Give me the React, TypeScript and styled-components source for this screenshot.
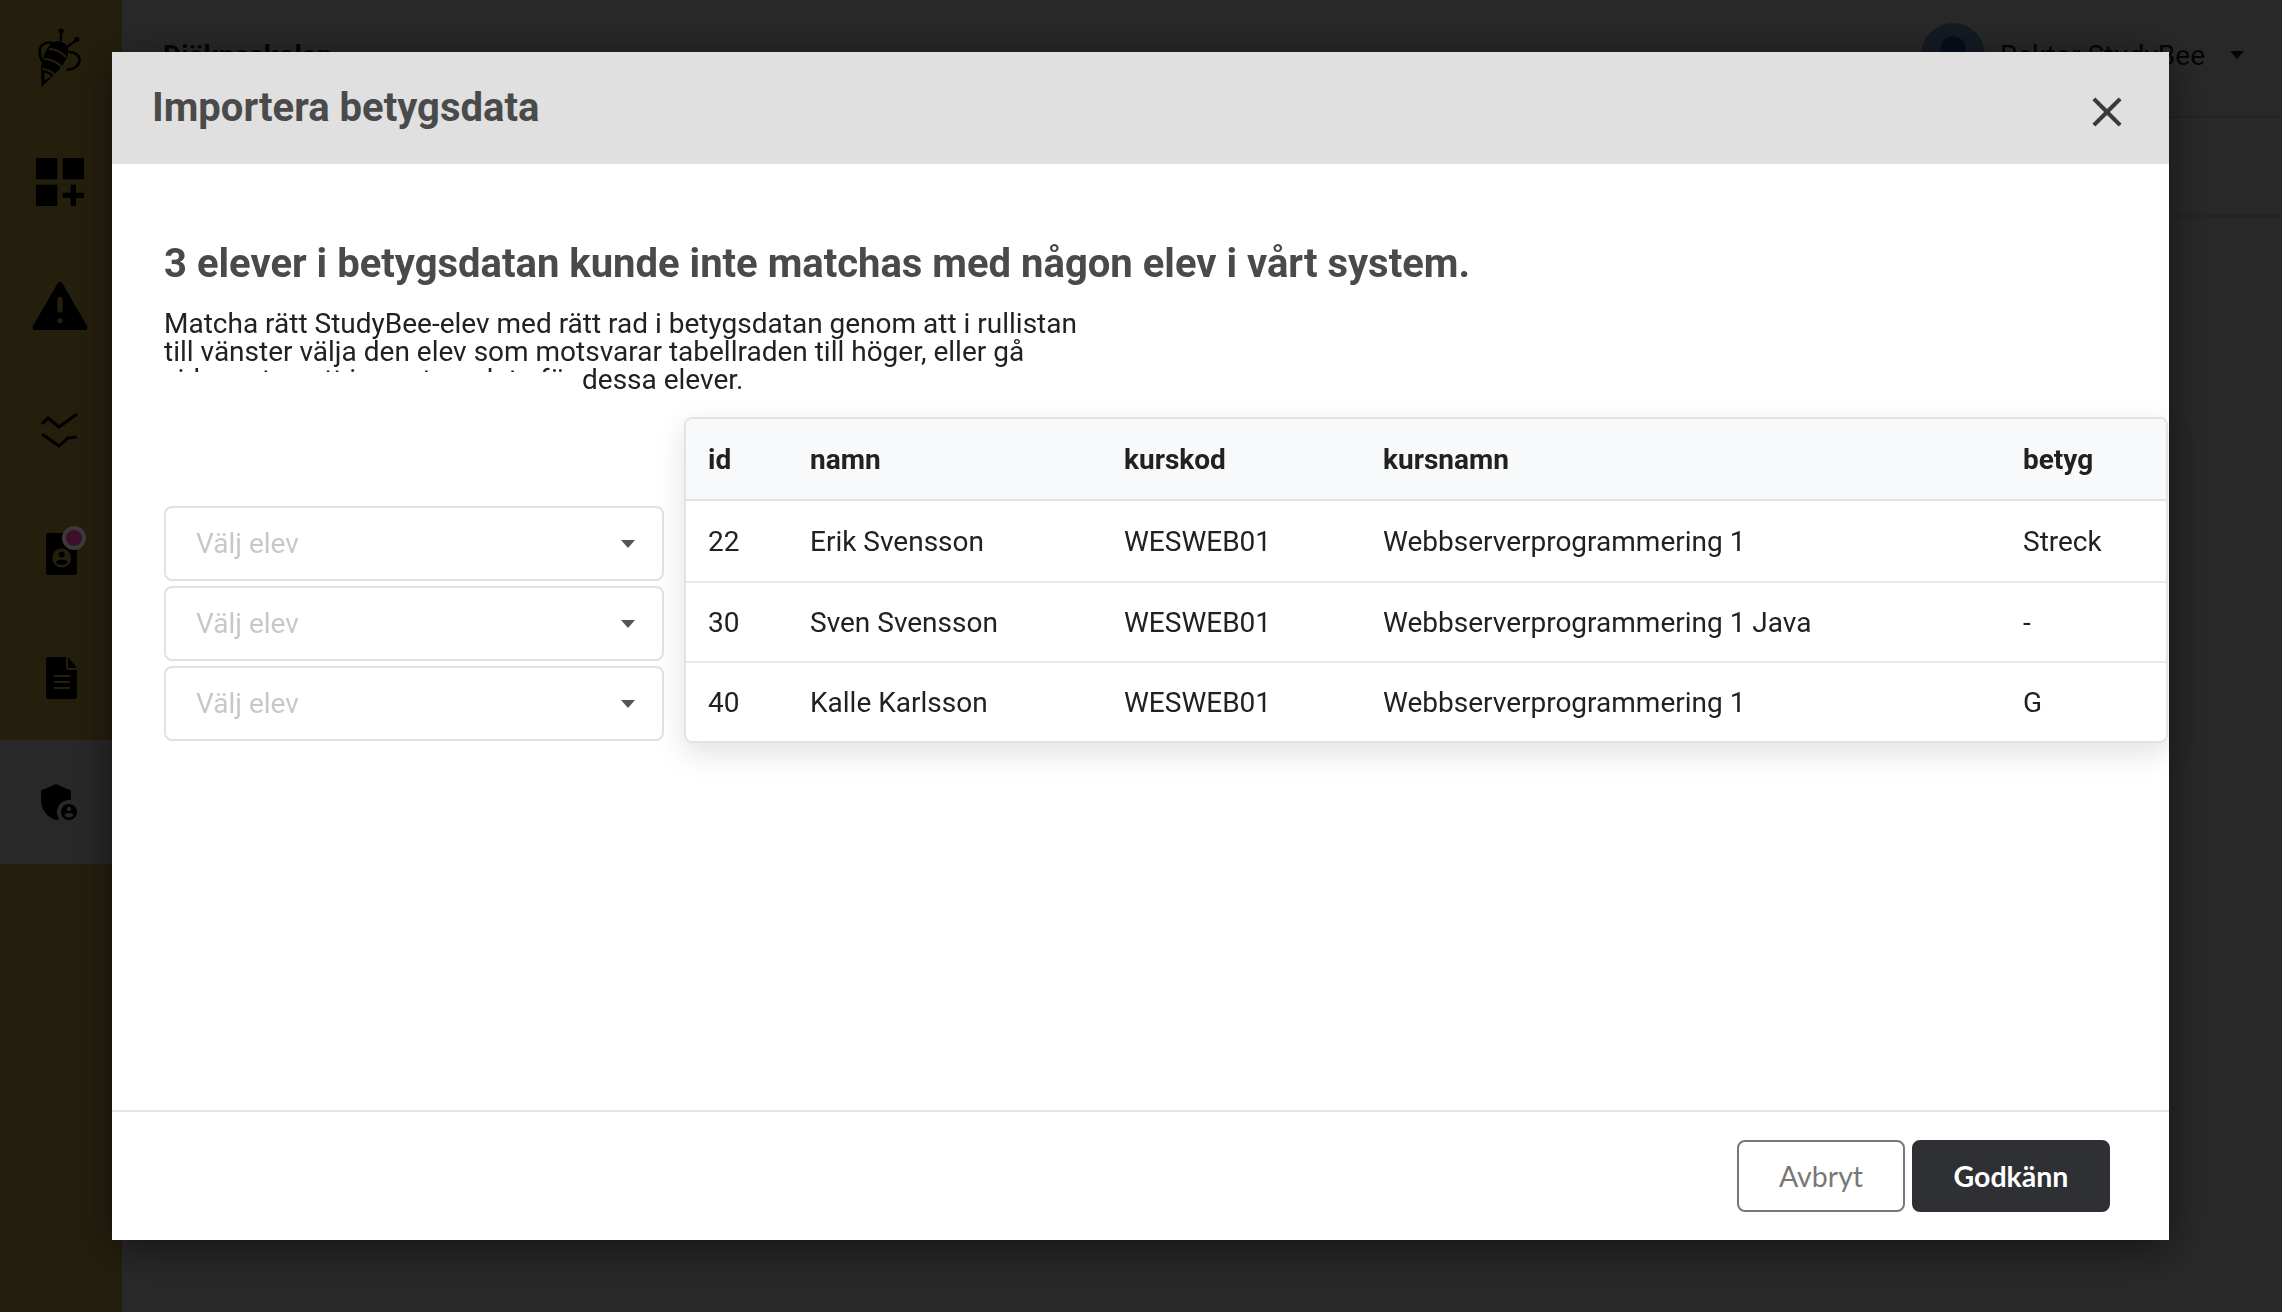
import React from 'react';
import styled, { createGlobalStyle } from 'styled-components';
import { MdAdminPanelSettings, MdClose, MdDashboardCustomize } from 'react-icons/md';

const GlobalStyle = createGlobalStyle`
    html, body {
        margin: 0;
        height: 100%;
        overflow: hidden;
        background: #fff;
        font-family: Roboto, "Liberation Sans", sans-serif;
    }
`;

const Page = styled.div`
    display: flex;
    height: 1312px;
`;

const Sidebar = styled.nav`
    display: flex;
    flex-direction: column;
    width: 122px;
    flex-shrink: 0;
    background: #e6bf52;
`;

const LogoItem = styled.div`
    display: flex;
    justify-content: center;
    height: 120px;
    padding: 28px 2px 0 0;
    box-sizing: border-box;
`;

const NavItem = styled.div<{ $active?: boolean; $shift?: number }>`
    position: relative;
    display: flex;
    align-items: center;
    justify-content: center;
    height: 124px;
    padding-right: ${(p) => 2 - (p.$shift ?? 0)}px;
    box-sizing: border-box;
    color: #000;
    background: ${(p) => (p.$active ? '#fff' : 'transparent')};
`;

const Badge = styled.span`
    position: absolute;
    left: 62px;
    top: 34px;
    width: 16px;
    height: 16px;
    border-radius: 50%;
    background: #3d0f2a;
    border: 4px solid #3a3a3a;
    z-index: 20;
`;

const Main = styled.div`
    flex: 1;
    display: flex;
    flex-direction: column;
    background: #fff;
`;

const TopBar = styled.header`
    display: flex;
    align-items: center;
    justify-content: space-between;
    height: 118px;
    padding: 0 38px 6px 41px;
    box-sizing: border-box;
    border-bottom: 2px solid #e0e0e0;
`;

const School = styled.div`
    font-size: 28px;
    font-weight: 700;
    color: #222;
`;

const User = styled.div`
    display: flex;
    align-items: center;
    font-size: 28px;
    color: #222;
`;

const Avatar = styled.span`
    width: 64px;
    height: 64px;
    border-radius: 50%;
    margin-right: 15px;
    background: radial-gradient(circle at 50% 40%, #2d54ae 0 12px, #81a8db 13px);
`;

const Caret = styled.span<{ $color?: string }>`
    width: 0;
    height: 0;
    border-left: 7px solid transparent;
    border-right: 7px solid transparent;
    border-top: 8px solid ${(p) => p.$color ?? '#222'};
`;

const UserCaret = styled(Caret)`
    margin-left: 25px;
`;

const SubBar = styled.div`
    height: 97px;
    border-bottom: 2px solid #e0e0e0;
`;

const Overlay = styled.div`
    position: fixed;
    inset: 0;
    z-index: 10;
    padding: 52px 0 0 112px;
    background: rgba(0, 0, 0, 0.845);
`;

const Modal = styled.div`
    display: flex;
    flex-direction: column;
    width: 2057px;
    height: 1188px;
    background: #fff;
    box-shadow: 0 8px 40px rgba(0, 0, 0, 0.5);
`;

const ModalHeader = styled.div`
    display: flex;
    align-items: center;
    justify-content: space-between;
    height: 112px;
    flex-shrink: 0;
    padding: 0 37px 0 40px;
    box-sizing: border-box;
    background: #e0e0e0;
`;

const ModalTitle = styled.h2`
    margin: 0 0 2px;
    font-size: 40px;
    font-weight: 700;
    color: #4a4a4a;
`;

const CloseButton = styled.span`
    display: flex;
    margin-top: 8px;
    color: #3a3a3a;
`;

const ModalBody = styled.div`
    flex: 1;
    padding: 74px 0 0 52px;
`;

const Heading = styled.h3`
    margin: 0 0 20px;
    font-size: 40px;
    line-height: 52px;
    font-weight: 700;
    color: #4a4a4a;
`;

const Intro = styled.p`
    position: relative;
    width: 930px;
    margin: 0 0 23px;
    font-size: 28px;
    line-height: 28px;
    color: #212121;
`;

const IntroMask = styled.span`
    position: absolute;
    left: 0;
    top: 62px;
    width: 414px;
    height: 28px;
    background: #fff;
`;

const MatchRow = styled.div`
    display: flex;
    align-items: flex-end;
    gap: 20px;
    padding-right: 1px;
`;

const SelectColumn = styled.div`
    display: flex;
    flex-direction: column;
    gap: 5px;
    width: 500px;
    flex-shrink: 0;
    padding-bottom: 2px;
`;

const SelectBox = styled.div`
    display: flex;
    align-items: center;
    justify-content: space-between;
    height: 75px;
    padding: 0 27px 0 30px;
    box-sizing: border-box;
    border: 2px solid #e2e2e2;
    border-radius: 8px;
    font-size: 28px;
    color: #c8c8c8;
`;

const TableCard = styled.div`
    flex: 1;
    border: 2px solid #e3e3e3;
    border-radius: 8px;
    overflow: hidden;
    box-shadow: 0 10px 30px rgba(0, 0, 0, 0.12);
`;

const Table = styled.table`
    width: 100%;
    border-collapse: collapse;
    table-layout: fixed;
    font-size: 28px;
    color: #212121;
`;

const HeadCell = styled.th<{ $width: number }>`
    width: ${(p) => p.$width}px;
    height: 81px;
    padding: 0 0 0 22px;
    box-sizing: border-box;
    text-align: left;
    font-weight: 700;
    background: #f8f9fa;
    border-bottom: 2px solid #e3e3e3;
`;

const Row = styled.tr<{ $height: number }>`
    height: ${(p) => p.$height}px;
`;

const Cell = styled.td`
    padding: 0 0 0 22px;
    border-bottom: 2px solid #e9e9e9;

    tr:last-child > & {
        border-bottom: 0;
    }
`;

const ModalFooter = styled.div`
    display: flex;
    align-items: center;
    justify-content: flex-end;
    gap: 7px;
    height: 130px;
    flex-shrink: 0;
    padding-right: 59px;
    box-sizing: border-box;
    border-top: 2px solid #e4e4e4;
`;

const Button = styled.button<{ $primary?: boolean }>`
    width: ${(p) => (p.$primary ? 198 : 168)}px;
    height: 72px;
    padding: 0;
    border: 2px solid ${(p) => (p.$primary ? '#2f3033' : '#777')};
    border-radius: 8px;
    background: ${(p) => (p.$primary ? '#2f3033' : '#fff')};
    color: ${(p) => (p.$primary ? '#fff' : '#777')};
    font-family: Lato, "Liberation Sans", sans-serif;
    font-size: 28.5px;
    font-weight: ${(p) => (p.$primary ? 700 : 400)};
`;

const BeeLogo = () => (
    <svg width="44" height="60" viewBox="0 0 44 60" fill="none">
        <path d="M23 4v9M38.7 12 29 19" stroke="#000" strokeWidth="2.2" />
        <circle cx="23" cy="3" r="2.6" fill="#000" />
        <circle cx="38.7" cy="11.5" r="2.6" fill="#000" />
        <path d="M18 17C12 12 2 15 1.6 23c-.3 6 3 12 7 15" stroke="#000" strokeWidth="2.6" />
        <path d="M31 24c5 0 10.500 3 10.500 8 0 6-7 10-13 10" stroke="#000" strokeWidth="2.6" />
        <path d="M20 13c7 1 12 6 10 13-1.500 6-6 13-12 19L3.500 59 3 42C4 30 10 13 20 13Z" fill="#000" />
        <path d="M11 21c5 0 12 3 17 8M6 31c6 0 13 3 18 8M4 41c4 0 9 2 13 6" stroke="#e6bf52" strokeWidth="2" />
        <path d="M6.500 45c2 0 5 1.500 7 3.500L6.500 52.500Z" fill="#e6bf52" />
    </svg>
);

const WarningIcon = () => (
    <svg width="64" height="64" viewBox="0 0 24 24" fill="currentColor">
        <path d="M2.73 21h18.54c.77 0 1.25-.83.87-1.500L12.87 3.500c-.38-.67-1.350-.67-1.740 0L1.860 19.500c-.38.67.1 1.500.87 1.500ZM13 17.500c0 .55-.45 1-1 1s-1-.45-1-1 .45-1 1-1 1 .45 1 1Zm-1-3c-.55 0-1-.45-1-1v-4c0-.55.45-1 1-1s1 .45 1 1v4c0 .55-.45 1-1 1Z" />
    </svg>
);

const ZigzagIcon = () => (
    <svg width="64" height="64" viewBox="0 0 64 64" fill="none" stroke="currentColor" strokeWidth="3">
        <path d="M14 26l6-6 11 9 18-13M14 36l17 12 9-8 9-1" />
    </svg>
);

const ContactIcon = () => (
    <svg width="31" height="42" viewBox="0 0 31 42">
        <rect width="31" height="42" rx="2" fill="#000" />
        <circle cx="15.700" cy="25" r="9.500" fill="#e6bf52" />
        <circle cx="15.700" cy="21.500" r="3" fill="#000" />
        <path d="M9.500 29.500c1.500-2.300 3.800-3 6.200-3s4.700.7 6.200 3c-1.500 1.500-3.800 2.500-6.200 2.500s-4.700-1-6.200-2.500Z" fill="#000" />
    </svg>
);

const DocumentIcon = () => (
    <svg width="31" height="42" viewBox="0 0 31 42">
        <path d="M2 0h18v11a2 2 0 0 0 2 2h9v27a2 2 0 0 1-2 2H2a2 2 0 0 1-2-2V2a2 2 0 0 1 2-2Z" fill="#000" />
        <path d="M22 0l9 11h-9Z" fill="#000" />
        <path d="M8 19h16M8 25h16M8 31h16" stroke="#e6bf52" strokeWidth="2.200" />
    </svg>
);

const students = [
    { id: 22, name: 'Erik Svensson', code: 'WESWEB01', course: 'Webbserverprogrammering 1', grade: 'Streck', height: 82 },
    { id: 30, name: 'Sven Svensson', code: 'WESWEB01', course: 'Webbserverprogrammering 1 Java', grade: '-', height: 80 },
    { id: 40, name: 'Kalle Karlsson', code: 'WESWEB01', course: 'Webbserverprogrammering 1', grade: 'G', height: 79 },
];

const App = () => {
    return (
        <>
            <GlobalStyle />
            <Page>
                <Sidebar>
                    <LogoItem>
                        <BeeLogo />
                    </LogoItem>
                    <NavItem>
                        <MdDashboardCustomize size={64} />
                    </NavItem>
                    <NavItem>
                        <WarningIcon />
                    </NavItem>
                    <NavItem>
                        <ZigzagIcon />
                    </NavItem>
                    <NavItem $shift={2}>
                        <ContactIcon />
                        <Badge />
                    </NavItem>
                    <NavItem $shift={2}>
                        <DocumentIcon />
                    </NavItem>
                    <NavItem $active $shift={-2}>
                        <MdAdminPanelSettings size={48} />
                    </NavItem>
                </Sidebar>
                <Main>
                    <TopBar>
                        <School>Djäkneskolan</School>
                        <User>
                            <Avatar />
                            Rektor StudyBee
                            <UserCaret />
                        </User>
                    </TopBar>
                    <SubBar />
                </Main>
            </Page>
            <Overlay>
                <Modal>
                    <ModalHeader>
                        <ModalTitle>Importera betygsdata</ModalTitle>
                        <CloseButton>
                            <MdClose size={50} />
                        </CloseButton>
                    </ModalHeader>
                    <ModalBody>
                        <Heading>3 elever i betygsdatan kunde inte matchas med någon elev i vårt system.</Heading>
                        <Intro>
                            Matcha rätt StudyBee-elev med rätt rad i betygsdatan genom att i rullistan till vänster välja den elev som motsvarar tabellraden till höger, eller gå vidare utan att importera data för dessa elever.
                            <IntroMask />
                        </Intro>
                        <MatchRow>
                            <SelectColumn>
                                {students.map((s) => (
                                    <SelectBox key={s.id}>
                                        Välj elev
                                        <Caret $color="#555" />
                                    </SelectBox>
                                ))}
                            </SelectColumn>
                            <TableCard>
                                <Table>
                                    <thead>
                                        <tr>
                                            <HeadCell $width={102}>id</HeadCell>
                                            <HeadCell $width={314}>namn</HeadCell>
                                            <HeadCell $width={259}>kurskod</HeadCell>
                                            <HeadCell $width={640}>kursnamn</HeadCell>
                                            <HeadCell $width={166}>betyg</HeadCell>
                                        </tr>
                                    </thead>
                                    <tbody>
                                        {students.map((s) => (
                                            <Row key={s.id} $height={s.height}>
                                                <Cell>{s.id}</Cell>
                                                <Cell>{s.name}</Cell>
                                                <Cell>{s.code}</Cell>
                                                <Cell>{s.course}</Cell>
                                                <Cell>{s.grade}</Cell>
                                            </Row>
                                        ))}
                                    </tbody>
                                </Table>
                            </TableCard>
                        </MatchRow>
                    </ModalBody>
                    <ModalFooter>
                        <Button>Avbryt</Button>
                        <Button $primary>Godkänn</Button>
                    </ModalFooter>
                </Modal>
            </Overlay>
        </>
    );
};

export default App;
